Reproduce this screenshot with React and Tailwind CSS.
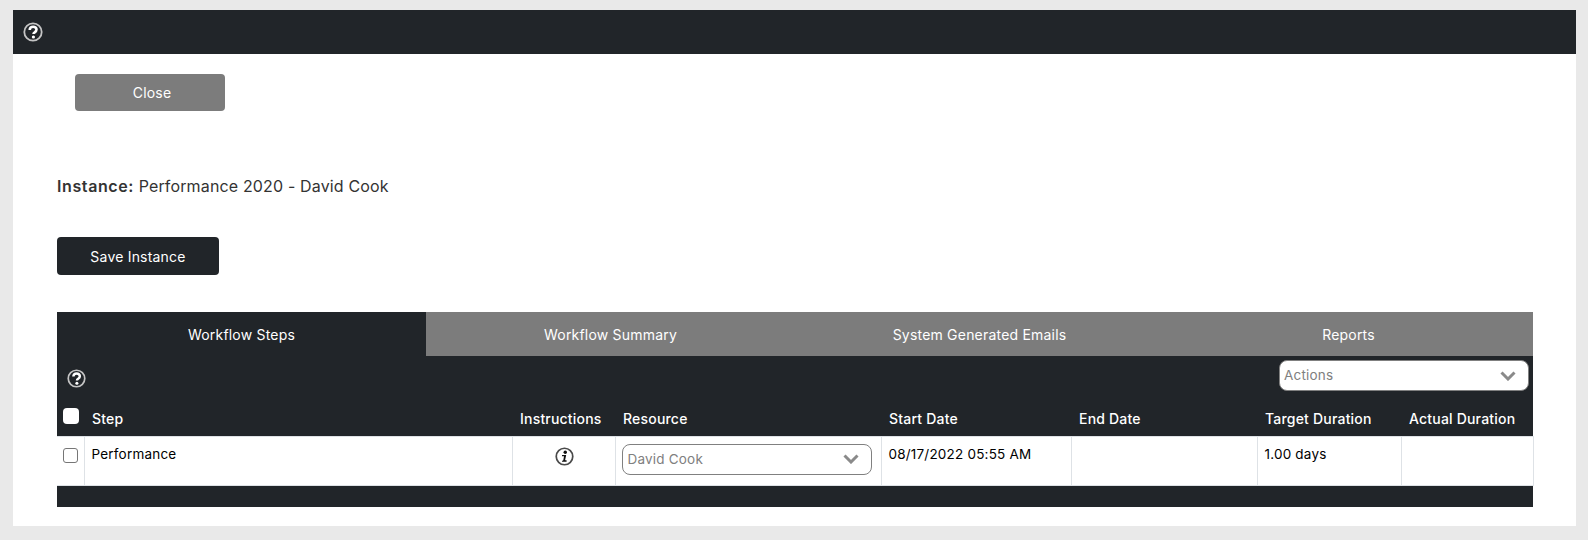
const font = { fontFamily: "Inter" };

const HelpIcon = ({ className }) => (
  <svg viewBox="0 0 20 20" className={className} fill="none">
    <circle cx="10" cy="10" r="8.7" stroke="#c4c4c4" strokeWidth="1.8" />
    <path
      d="M6.7 7.9C6.7 5.8 8.2 4.7 10.1 4.7C12.1 4.7 13.5 5.9 13.5 7.6C13.5 9 12.6 9.7 11.7 10.3C10.9 10.8 10.5 11.2 10.5 12.1"
      stroke="#ffffff"
      strokeWidth="2.6"
    />
    <circle cx="10.4" cy="15" r="1.6" fill="#ffffff" />
  </svg>
);

const InfoIcon = () => (
  <svg viewBox="0 0 20 20" className="w-[19px] h-[19px] mx-auto" fill="none">
    <circle cx="10" cy="10" r="8.7" stroke="#4a4a4a" strokeWidth="1.8" />
    <circle cx="10.8" cy="5.6" r="1.8" fill="#111111" />
    <path
      d="M7.4 8.4H11.8L10.7 13.5C10.6 14.1 11 14.2 12.2 13.9V15.4H7.4V14.4C8.4 14.4 8.7 14.2 8.8 13.6L9.5 9.8H7.4Z"
      fill="#111111"
    />
  </svg>
);

const Chevron = () => (
  <svg viewBox="0 0 16 10" className="w-4 h-[10px]" fill="none">
    <path d="M1.5 1.5L8 8L14.5 1.5" stroke="#8a8a8a" strokeWidth="3" />
  </svg>
);

const Select = ({ label, className }) => (
  <div
    className={`flex items-center justify-between bg-white border border-[#808080] rounded-lg h-[31px] text-[13.5px] text-[#808080] tracking-[0.2px] ${className}`}
  >
    <span>{label}</span>
    <Chevron />
  </div>
);

const tabs = ["Workflow Summary", "System Generated Emails", "Reports"];

const columns = [
  { name: "Step", width: "w-[428px]" },
  { name: "Instructions", width: "w-[103px]" },
  { name: "Resource", width: "w-[266px]" },
  { name: "Start Date", width: "w-[190px]" },
  { name: "End Date", width: "w-[186px]" },
  { name: "Target Duration", width: "w-[144px]" },
  { name: "Actual Duration", width: "w-[132px]" },
];

export default function App() {
  return (
    <div className="h-[540px] bg-[#e9e9e9] pt-[10px] pl-[13px] pr-[12px]" style={font}>
      <div className="h-[516px] bg-white">
        <div className="h-[44px] bg-[#212529] flex items-center pl-[10px]">
          <HelpIcon className="w-5 h-5" />
        </div>

        <div className="pl-[44px] pr-[43px]">
          <button className="block mt-5 ml-[18px] w-[150px] h-[37px] pl-1 rounded bg-[#7c7c7c] text-white text-[14px] tracking-[0.2px]">
            Close
          </button>

          <p className="mt-[63px] h-6 leading-6 text-[16px] text-[#333333] tracking-[0.15px]">
            <b className="font-semibold tracking-[0.6px]">Instance:</b> Performance 2020 - David Cook
          </p>

          <button className="block mt-[39px] w-[162px] h-[38px] pt-px rounded bg-[#212529] text-white text-[14px] tracking-[0.2px]">
            Save Instance
          </button>

          <div className="mt-[37px] bg-[#212529]">
            <div className="grid grid-cols-4 h-[44px] text-[14px] text-white tracking-[0.2px]">
              <div className="flex items-center justify-center">Workflow Steps</div>
              {tabs.map((tab) => (
                <div key={tab} className="flex items-center justify-center bg-[#7c7c7c]">
                  {tab}
                </div>
              ))}
            </div>

            <div className="flex items-start justify-between h-[48px] pt-[4px] pl-[10px] pr-1">
              <HelpIcon className="w-[19px] h-[19px] mt-[9px]" />
              <Select label="Actions" className="w-[250px] pl-[4px] pr-[12px]" />
            </div>

            <table className="w-full table-fixed border-collapse text-[13.5px] tracking-[0.2px]">
              <colgroup>
                <col className="w-[27px]" />
                {columns.map((col) => (
                  <col key={col.name} className={col.width} />
                ))}
              </colgroup>
              <thead>
                <tr className="h-[32px] text-white">
                  <th className="pl-[6px] align-top">
                    <span className="block w-[16px] h-[16px] mt-[4px] rounded-[4px] bg-white" />
                  </th>
                  {columns.map((col) => (
                    <th key={col.name} className="font-medium text-[14px] text-left pl-[8px] pb-[2px] whitespace-nowrap">
                      {col.name}
                    </th>
                  ))}
                </tr>
              </thead>
              <tbody>
                <tr className="h-[49px] bg-white text-black align-top border-y border-[#dee2e6]">
                  <td className="pl-[6px] pt-[11px]">
                    <span className="block w-[15px] h-[15px] rounded-[3px] bg-white border border-[#767676]" />
                  </td>
                  <td className="border-l border-[#dee2e6] pl-[7px] pt-[7px]">Performance</td>
                  <td className="border-l border-[#dee2e6] pt-[10px] pl-[2px]">
                    <InfoIcon />
                  </td>
                  <td className="border-l border-[#dee2e6] pl-[6px] pt-[7px]">
                    <Select label="David Cook" className="w-[250px] pl-[5px] pr-[12px]" />
                  </td>
                  <td className="border-l border-[#dee2e6] pl-[7px] pt-[7px]">08/17/2022 05:55 AM</td>
                  <td className="border-l border-[#dee2e6]"></td>
                  <td className="border-l border-[#dee2e6] pl-[7px] pt-[7px]">1.00 days</td>
                  <td className="border-x border-[#dee2e6]"></td>
                </tr>
              </tbody>
            </table>

            <div className="h-[21px]"></div>
          </div>
        </div>
      </div>
    </div>
  );
}
